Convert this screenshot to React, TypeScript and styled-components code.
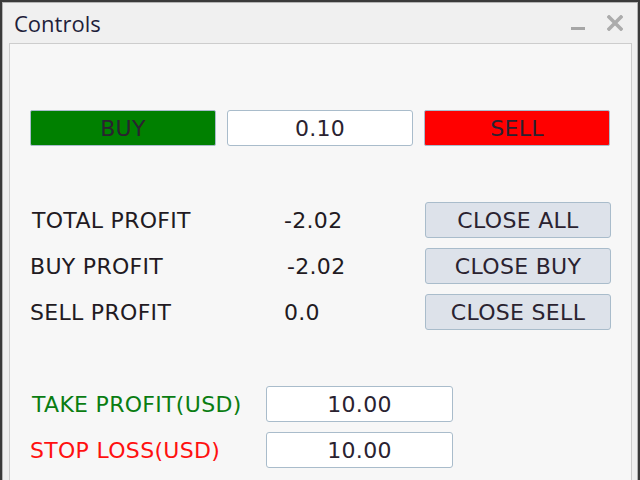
import React from "react";
import styled, { createGlobalStyle } from "styled-components";

const Global = createGlobalStyle`
  html, body { margin: 0; padding: 0; background: #3a3a3a; }
  body { width: 640px; height: 480px; overflow: hidden; font-family: "DejaVu Sans", sans-serif; }
`;

const UI_FONT = `"DejaVu Sans", "Liberation Sans", sans-serif`;

const Window = styled.div`
  margin: 2px 0 0 2px;
  width: 634px;
  height: 490px;
  background: #f0f0f0;
  border: 1px solid #b4b4b4;
  display: flex;
  flex-direction: column;
`;

const TitleBar = styled.div`
  height: 40px;
  display: flex;
  align-items: center;
  padding: 0 14px 0 11px;
`;

const Title = styled.div`
  flex: 1;
  font-family: "Open Sans", sans-serif;
  font-size: 22px;
  color: #1e1e3a;
  padding-bottom: 1px;
`;

const TitleIcons = styled.div`
  display: flex;
  align-items: center;
  gap: 22px;
`;

const Panel = styled.div`
  margin: 0 5px 0 6px;
  flex: 1;
  background: #f7f7f7;
  border: 1px solid #cdcdcd;
  border-bottom: none;
  padding: 66px 20px 0 20px;
  display: flex;
  flex-direction: column;
`;

const TradeRow = styled.div`
  display: grid;
  grid-template-columns: 186px 186px 186px;
  column-gap: 11px;
  height: 36px;
`;

const Btn = styled.div<{ $bg: string }>`
  box-sizing: border-box;
  height: 36px;
  background: ${(p) => p.$bg};
  border: 1px solid #a9bccb;
  border-radius: 2px;
  display: flex;
  align-items: center;
  justify-content: center;
  font-family: ${UI_FONT};
  font-size: 22px;
  letter-spacing: 0.3px;
  color: #2a2230;
`;

const Field = styled.div`
  box-sizing: border-box;
  height: 36px;
  background: #ffffff;
  border: 1px solid #a9bccb;
  border-radius: 3px;
  display: flex;
  align-items: center;
  justify-content: center;
  font-family: ${UI_FONT};
  font-size: 22px;
  letter-spacing: 0.3px;
  color: #2a2230;
`;

const Stats = styled.div`
  margin-top: 56px;
  display: grid;
  grid-template-columns: 254px 141px 186px;
  row-gap: 10px;
`;

const Label = styled.div<{ $color?: string; $dx?: number }>`
  display: flex;
  align-items: center;
  font-family: ${UI_FONT};
  font-size: 22px;
  letter-spacing: 0.3px;
  color: ${(p) => p.$color || "#221a22"};
  padding-left: ${(p) => p.$dx ?? 0}px;
`;

const Value = styled(Label)``;

const CloseBtn = styled(Btn)`
  border-radius: 3px;
`;

const Limits = styled.div`
  margin-top: 56px;
  display: grid;
  grid-template-columns: 236px 187px;
  row-gap: 10px;
`;

export default function App() {
  return (
    <>
      <Global />
      <Window>
        <TitleBar>
          <Title>Controls</Title>
          <TitleIcons>
            <svg width="14" height="16" viewBox="0 0 14 16">
              <rect x="0" y="12" width="14" height="3" fill="#a6a6a6" />
            </svg>
            <svg width="16" height="16" viewBox="0 0 16 16">
              <path d="M2 2 L14 14 M14 2 L2 14" stroke="#acacac" strokeWidth="3.6" strokeLinecap="square" />
            </svg>
          </TitleIcons>
        </TitleBar>
        <Panel>
          <TradeRow>
            <Btn $bg="#008000">BUY</Btn>
            <Field>0.10</Field>
            <Btn $bg="#ff0000">SELL</Btn>
          </TradeRow>
          <Stats>
            <Label $dx={2}>TOTAL PROFIT</Label>
            <Value>-2.02</Value>
            <CloseBtn $bg="#dde2ea">CLOSE ALL</CloseBtn>
            <Label>BUY PROFIT</Label>
            <Value $dx={3}>-2.02</Value>
            <CloseBtn $bg="#dde2ea">CLOSE BUY</CloseBtn>
            <Label>SELL PROFIT</Label>
            <Value>0.0</Value>
            <CloseBtn $bg="#dde2ea">CLOSE SELL</CloseBtn>
          </Stats>
          <Limits>
            <Label $dx={2} $color="#0a7d12">TAKE PROFIT(USD)</Label>
            <Field>10.00</Field>
            <Label $color="#ff1010">STOP LOSS(USD)</Label>
            <Field>10.00</Field>
          </Limits>
        </Panel>
      </Window>
    </>
  );
}
